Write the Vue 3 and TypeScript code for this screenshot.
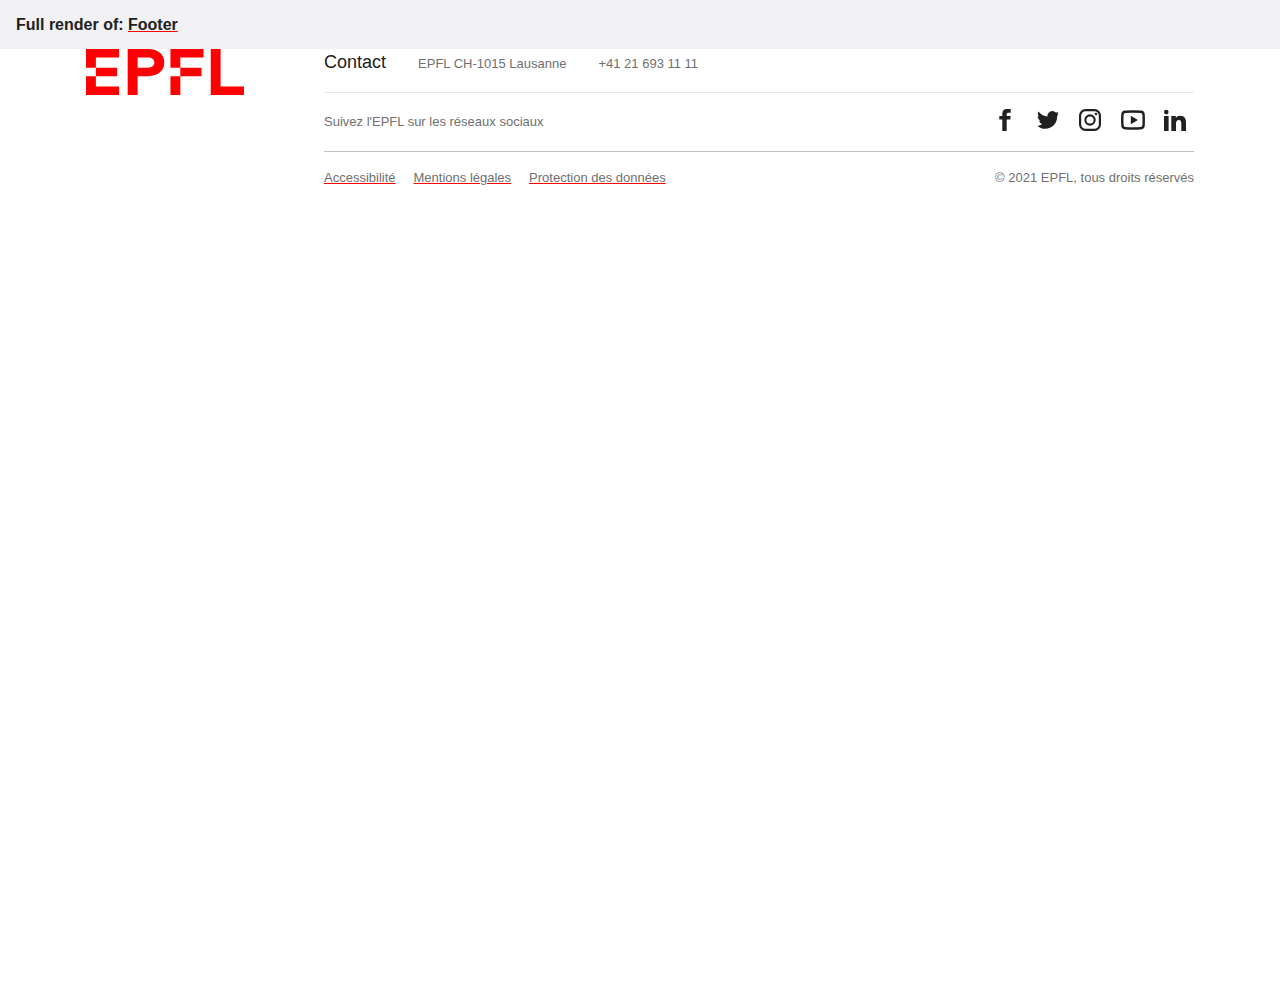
<script setup lang="ts">
interface FooterLink {
  label: string
  href: string
}

interface SocialLink {
  label: string
  href: string
  path: string
}

const legalLinks: FooterLink[] = [
  { label: 'Accessibilité', href: '#accessibilite' },
  { label: 'Mentions légales', href: '#mentions-legales' },
  { label: 'Protection des données', href: '#protection-des-donnees' },
]

const socialLinks: SocialLink[] = [
  {
    label: 'Facebook',
    href: '#facebook',
    path: 'M10.300 23V11.500H7.300V7.900h3V5.800C10.300 2.500 11.900 1 15 1h3.700v3.700h-2.200c-1.400 0-1.800.500-1.800 1.700v1.500h4l-.400 3.600h-3.600V23z',
  },
  {
    label: 'Twitter',
    href: '#twitter',
    path: 'M23.400 3.700c-.500.400-1 .600-1.700.700l-.800.100A5 5 0 0 0 17.300 3a5 5 0 0 0-4.900 5.500C8.700 8.200 5.900 6.500 3.500 3.600c-.9 1.600-.8 3.500.2 5l-1-.300c0 2 .9 3.500 2.600 4.400l-1.300.100c.5 1.600 1.500 2.600 3.100 3.100-1.400 1.200-3 1.800-4.800 1.800 2.100 2 4.700 3.100 7.700 3.100 7.300 0 12.100-5.600 12.100-12.100V7.900c.600-.600 1-1.200 1.300-1.900l-1.400.300c.700-.700 1.200-1.600 1.400-2.600z',
  },
  {
    label: 'Instagram',
    href: '#instagram',
    path: 'M7.500 1h9A6.500 6.500 0 0 1 23 7.500v9a6.500 6.500 0 0 1-6.500 6.500h-9A6.500 6.500 0 0 1 1 16.500v-9A6.500 6.500 0 0 1 7.500 1zm0 2.200A4.300 4.300 0 0 0 3.200 7.500v9A4.300 4.300 0 0 0 7.500 20.800h9a4.300 4.300 0 0 0 4.300-4.300v-9A4.300 4.300 0 0 0 16.500 3.200zM12 6.300a5.700 5.700 0 1 1 0 11.400 5.700 5.700 0 0 1 0-11.400zm0 2.100a3.600 3.600 0 1 0 0 7.200 3.600 3.600 0 0 0 0-7.200zM18 4.700a1.300 1.300 0 1 1 0 2.600 1.300 1.300 0 0 1 0-2.600z',
  },
  {
    label: 'YouTube',
    href: '#youtube',
    path: 'M4 2.600Q12 1.900 20 2.600Q23.500 2.800 23.800 6.500Q24.200 12 23.800 17.500Q23.500 21.200 20 21.400Q12 22.100 4 21.400Q.500 21.200 .200 17.500Q-.200 12 .200 6.500Q.500 2.800 4 2.600zM4.500 4.900Q2.700 5 2.600 7Q2.300 12 2.600 17Q2.700 19 4.500 19.100Q12 19.600 19.500 19.100Q21.300 19 21.400 17Q21.700 12 21.400 7Q21.300 5 19.500 4.900Q12 4.400 4.500 4.900zM9.800 7.700v8.600l7.200-4.300z',
  },
  {
    label: 'LinkedIn',
    href: '#linkedin',
    path: 'M2.300 1.800a2.300 2.300 0 1 1 0 4.600 2.300 2.300 0 0 1 0-4.600zM0 8h4.600v15H0zM7.300 8h4.500v1.900c.8-1.400 2.300-2.200 4.300-2.200 4.500 0 5.900 2.800 5.900 6.800V23h-4.700v-7.500c0-2-.500-3.600-2.500-3.600S12 13.500 12 15.500V23H7.300z',
  },
]
</script>

<template>
  <header class="preview-bar">
    <p class="preview-title">Full render of: <a href="#footer">Footer</a></p>
  </header>

  <footer id="footer" class="footer">
    <a class="logo" href="#home" aria-label="EPFL">
      <svg viewBox="0 0 182.400 53" aria-hidden="true">
        <path d="M0 21.600h11.400v-11.800h26.800V0H0zM0 53h38.200V43.200H11.400v-11.800H0zM11.400 21.600h24.500v9.800H11.400z" />
        <path
          fill-rule="evenodd"
          d="M48.100 0h23.700c11.500 0 18.600 6.400 18.600 15.700s-7.100 15.700-18.600 15.700H59.600V53H48.100zM59.600 9.800v11.800h11.500c5 0 7.800-2.100 7.800-5.900s-2.800-5.900-7.800-5.900z"
        />
        <path d="M97.500 0h38.200v9.800h-26.800v11.800H97.500zM97.500 31.400h11.400V53H97.500zM108.900 21.600h24.500v9.800h-24.500z" />
        <path d="M144 0h11.400v43.200h27V53H144z" />
      </svg>
    </a>

    <div class="content">
      <address class="row contact">
        <h2>Contact</h2>
        <span>EPFL CH-1015 Lausanne</span>
        <span>+41 21 693 11 11</span>
      </address>

      <div class="row social">
        <p>Suivez l'EPFL sur les réseaux sociaux</p>
        <nav class="social-links" aria-label="Réseaux sociaux">
          <a v-for="item in socialLinks" :key="item.label" :href="item.href" :aria-label="item.label">
            <svg viewBox="0 0 24 24" aria-hidden="true">
              <path fill-rule="evenodd" :d="item.path" />
            </svg>
          </a>
        </nav>
      </div>

      <div class="row legal">
        <nav class="legal-links" aria-label="Informations légales">
          <a v-for="link in legalLinks" :key="link.label" :href="link.href">{{ link.label }}</a>
        </nav>
        <p>© 2021 EPFL, tous droits réservés</p>
      </div>
    </div>
  </footer>
</template>

<style>
body {
  margin: 0;
  background: #fff;
  color: #212121;
  font-family: "Liberation Sans", Arial, sans-serif;
}
</style>

<style scoped>
.preview-bar {
  padding: 13px 16px 12px;
  background: #f1f1f4;
}

p,
h2 {
  margin: 0;
}

.preview-title {
  font-size: 16px;
  font-weight: 700;
  line-height: 24px;
}

a {
  color: inherit;
  text-decoration-color: #f00;
}

.footer {
  display: flex;
  gap: 80px;
  box-sizing: border-box;
  max-width: 1140px;
  margin: 0 auto;
  padding: 0 16px;
}

.logo {
  flex: none;
  width: 158px;
}

.logo svg {
  display: block;
  width: 100%;
  fill: #f00;
}

.content {
  flex: 1;
  min-width: 0;
  color: #707070;
  font-size: 13px;
  line-height: 20px;
}

.row {
  display: flex;
  flex-wrap: wrap;
}

.contact {
  align-items: baseline;
  gap: 0 32px;
  padding-bottom: 16px;
  border-bottom: 1px solid #e6e6e6;
  font-style: normal;
}

.contact h2 {
  color: #212121;
  font-size: 18px;
  font-weight: 400;
  line-height: 27px;
}

.social {
  align-items: flex-end;
  justify-content: space-between;
  padding: 15px 0 19px;
  border-bottom: 1px solid #c1c1c1;
}

.social-links {
  display: flex;
  gap: 19px;
  padding-right: 6px;
}

.social-links svg {
  display: block;
  width: 24px;
  height: 24px;
  overflow: visible;
  fill: #212121;
}

.legal {
  justify-content: space-between;
  padding-top: 16px;
}

.legal-links {
  display: flex;
  gap: 18px;
}
</style>
